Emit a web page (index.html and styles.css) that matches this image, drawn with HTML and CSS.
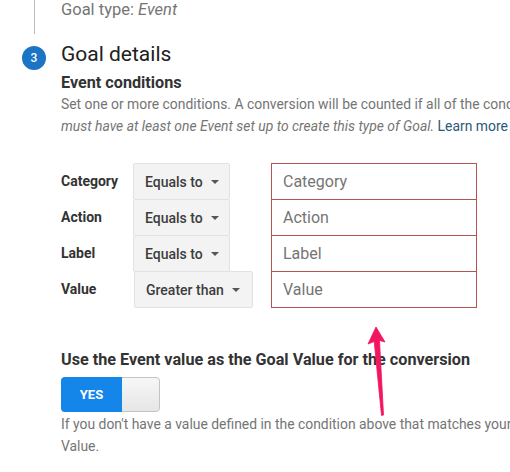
FILE: index.html
```html
<!DOCTYPE html>
<html>
<head>
<meta charset="utf-8">
<link rel="stylesheet" href="styles.css">
</head>
<body>
<div class="page">
  <div class="step step-prev">
    <div class="rail"><div class="rail-line"></div></div>
    <div class="content">
      <div class="goal-type">Goal type: <em>Event</em></div>
    </div>
  </div>
  <div class="step step-current">
    <div class="rail"><div class="badge">3</div></div>
    <div class="content">
      <h2 class="step-title">Goal details</h2>
      <h3 class="sub-title">Event conditions</h3>
      <p class="desc">Set one or more conditions. A conversion will be counted if all of the conditions you set are true when an Event is triggered. You<br><em>must have at least one Event set up to create this type of Goal.</em> <a class="link" href="#">Learn more</a></p>

      <div class="conditions">
        <div class="cond-label">Category</div>
        <div class="select">Equals to <span class="caret"></span></div>
        <div class="field">Category</div>

        <div class="cond-label">Action</div>
        <div class="select">Equals to <span class="caret"></span></div>
        <div class="field">Action</div>

        <div class="cond-label">Label</div>
        <div class="select">Equals to <span class="caret"></span></div>
        <div class="field">Label</div>

        <div class="cond-label">Value</div>
        <div class="select select-wide">Greater than <span class="caret"></span></div>
        <div class="field">Value</div>
      </div>

      <h3 class="sub-title value-title">Use the Event value as the Goal Value for the conversion</h3>
      <div class="toggle">
        <div class="toggle-on">YES</div>
        <div class="toggle-knob"></div>
      </div>
      <p class="desc note">If you don't have a value defined in the condition above that matches your Event value, the conversion will use the Goal<br>Value.</p>
    </div>
  </div>
  <svg class="arrow" width="40" height="100" viewBox="0 0 40 100">
    <polygon points="16,7 25,22 19.5,20.5 23.5,95 21.5,95.5 14.2,21.5 8,24" fill="#f2155f" stroke="#f2155f" stroke-width="0.8" stroke-linejoin="round"/>
  </svg>
</div>
</body>
</html>
```
FILE: styles.css
```css
html, body {
  margin: 0;
  padding: 0;
  overflow: hidden;
  background: #ffffff;
}

body {
  font-family: Roboto, "Noto Sans", Arial, sans-serif;
  color: #212121;
}

.page {
  position: relative;
  width: 510px;
  height: 472px;
}

.step {
  display: flex;
}

.rail {
  width: 61px;
  flex: 0 0 61px;
  display: flex;
  flex-direction: column;
}

.rail-line {
  width: 1px;
  flex: 1;
  margin-left: 34px;
  background: #bdbdbd;
}

.badge {
  width: 24px;
  height: 24px;
  margin: 12px 0 0 22px;
  border-radius: 50%;
  background: #1b74c4;
  color: #ffffff;
  font-size: 12px;
  font-weight: 500;
  line-height: 24px;
  text-align: center;
}

.content {
  flex: 1;
  min-width: 0;
}

.goal-type {
  font-size: 16.5px;
  line-height: 20px;
  color: #757575;
  padding-bottom: 14px;
  white-space: nowrap;
}

.step-title {
  margin: 6px 0 0;
  font-size: 21px;
  font-weight: 400;
  line-height: 28px;
  color: #212121;
}

.sub-title {
  margin: 5px 0 0;
  font-size: 16.2px;
  font-weight: 700;
  line-height: 20px;
  color: #333333;
  white-space: nowrap;
}

.desc {
  margin: 0;
  font-size: 13.9px;
  line-height: 22px;
  color: #757575;
  white-space: nowrap;
}

.link {
  color: #2d5878;
  text-decoration: none;
}

.conditions {
  margin-top: 26px;
  display: grid;
  grid-template-columns: 72px 138px 206px;
  grid-auto-rows: 36px;
  align-items: start;
}

.cond-label {
  height: 36px;
  line-height: 36px;
  font-size: 14px;
  font-weight: 700;
  color: #333333;
}

.select {
  justify-self: start;
  box-sizing: border-box;
  height: 37px;
  display: flex;
  align-items: center;
  gap: 8px;
  padding: 0 10px 0 11px;
  background: #f3f3f3;
  border: 1px solid #e2e2e2;
  border-radius: 2px;
  font-size: 14px;
  font-weight: 500;
  color: #3d3d3d;
  white-space: nowrap;
}

.select-wide {
  margin-left: 1px;
  padding-right: 12px;
}

.caret {
  width: 0;
  height: 0;
  border-left: 4px solid transparent;
  border-right: 4px solid transparent;
  border-top: 4px solid #555555;
  margin-top: 1px;
}

.field {
  box-sizing: border-box;
  height: 37px;
  border: 1px solid #b4544c;
  padding-left: 11px;
  font-size: 16px;
  line-height: 35px;
  color: #757575;
}

.value-title {
  margin-top: 43px;
}

.toggle {
  margin-top: 7px;
  width: 99px;
  height: 35px;
  display: flex;
  border-radius: 4px;
  overflow: hidden;
}

.toggle-on {
  width: 61px;
  background: #1486ea;
  color: #ffffff;
  font-size: 13px;
  font-weight: 700;
  line-height: 35px;
  text-align: center;
}

.toggle-knob {
  flex: 1;
  box-sizing: border-box;
  background: linear-gradient(#f7f7f7, #e6e6e6);
  border: 1px solid #c4c4c4;
  border-left: none;
  border-radius: 0 4px 4px 0;
}

.note {
  margin-top: 1px;
}

.arrow {
  position: absolute;
  left: 360px;
  top: 320px;
}
```
